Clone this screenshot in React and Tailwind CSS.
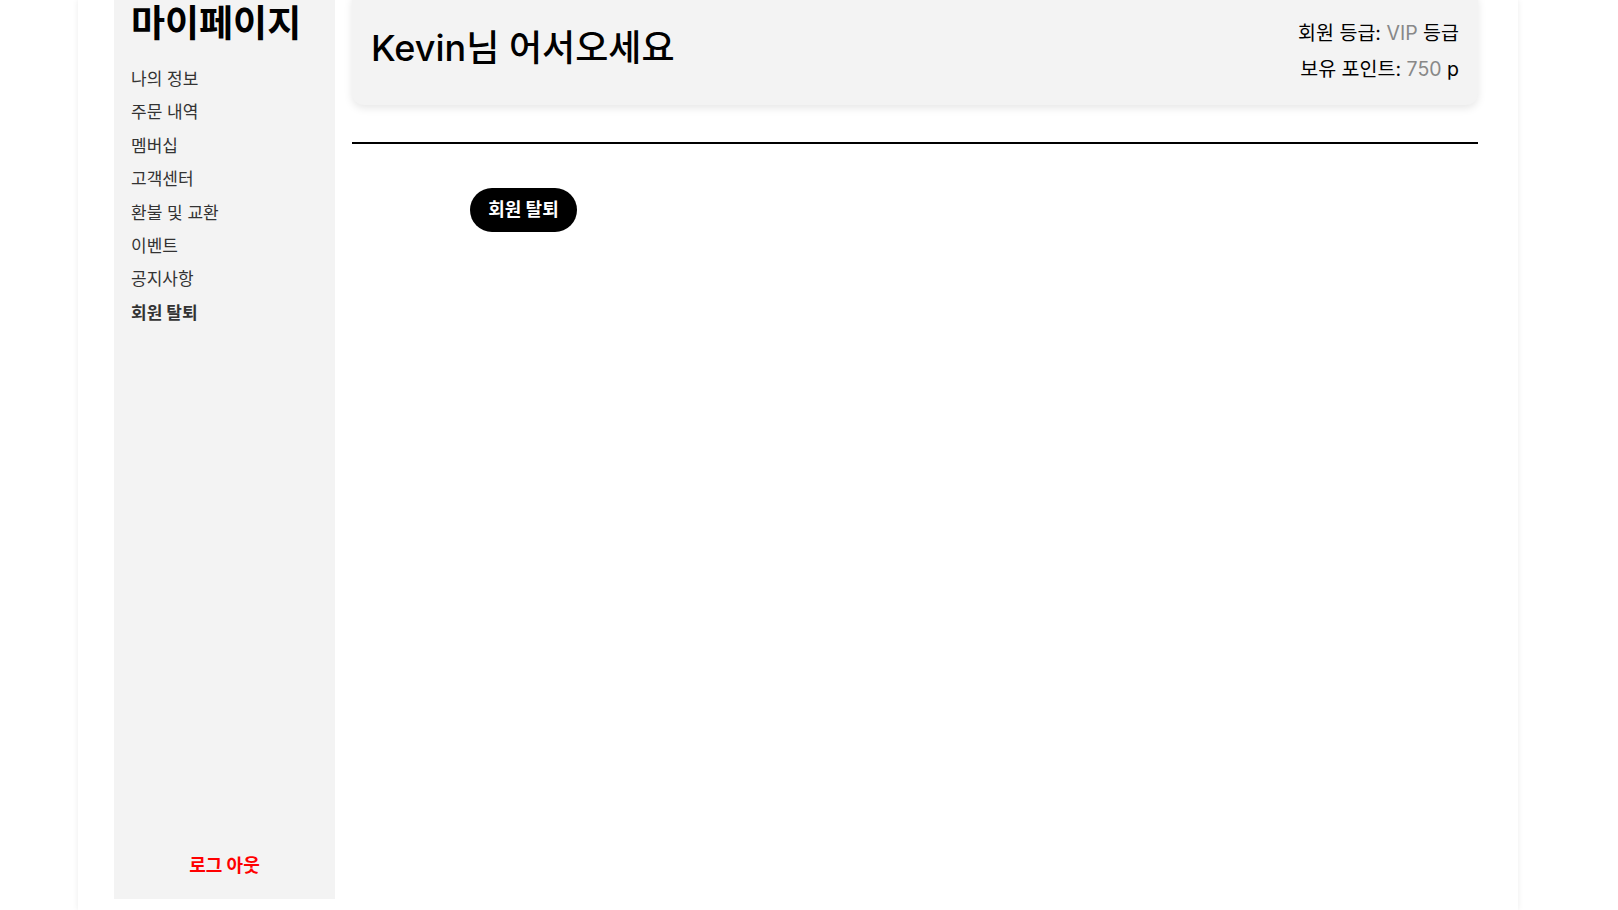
const menu = ['나의 정보', '주문 내역', '멤버십', '고객센터', '환불 및 교환', '이벤트', '공지사항', '회원 탈퇴'];

export default function App() {
  return (
    <div
      className="h-[910px] overflow-hidden bg-white"
      style={{ fontFamily: 'Inter, "Noto Sans CJK KR", sans-serif' }}
    >
      <div className="ml-[78px] flex h-full w-[1440px] shadow-[0_0_6px_rgba(0,0,0,0.08)]">
        {/* 사이드바 */}
        <aside className="ml-[36px] flex h-[899px] w-[221px] flex-col justify-between bg-[#f3f3f3] pl-[17px]">
          <div>
            <h1 className="pt-[4px] text-[37px] font-bold leading-[40px] text-black">마이페이지</h1>
            <ul className="mt-[19px] flex flex-col">
              {menu.map((item, i) => (
                <li
                  key={item}
                  className={`flex h-[33.4px] items-center text-[17px] text-[#333] ${i === menu.length - 1 ? 'font-bold' : ''}`}
                >
                  {item}
                </li>
              ))}
            </ul>
          </div>
          <div className="pb-[21px] pr-[17px] text-center text-[18px] font-bold leading-[24px] text-[#ff0000]">로그 아웃</div>
        </aside>

        {/* 메인 */}
        <main className="ml-[17px] w-[1126px]">
          <div className="-mt-[10px] flex h-[115px] items-center justify-between rounded-xl bg-[#f3f3f3] px-[19px] shadow-[0_3px_8px_rgba(0,0,0,0.1)]">
            <h2 className="text-[36px] font-medium text-black">Kevin님 어서오세요</h2>
            <div className="mt-[7px] flex flex-col items-end gap-[9px] text-[19.5px] leading-[27px] text-black">
              <p>
                회원 등급: <span className="text-[#888]">VIP</span> 등급
              </p>
              <p>
                보유 포인트: <span className="text-[#888]">750</span> p
              </p>
            </div>
          </div>

          <div className="mt-[37px] h-[1.5px] bg-black" />

          <div className="pl-[118px] pt-[44px]">
            <button className="h-[44px] w-[107px] rounded-[22px] bg-black text-[18px] font-bold text-white">회원 탈퇴</button>
          </div>
        </main>
      </div>
    </div>
  );
}
